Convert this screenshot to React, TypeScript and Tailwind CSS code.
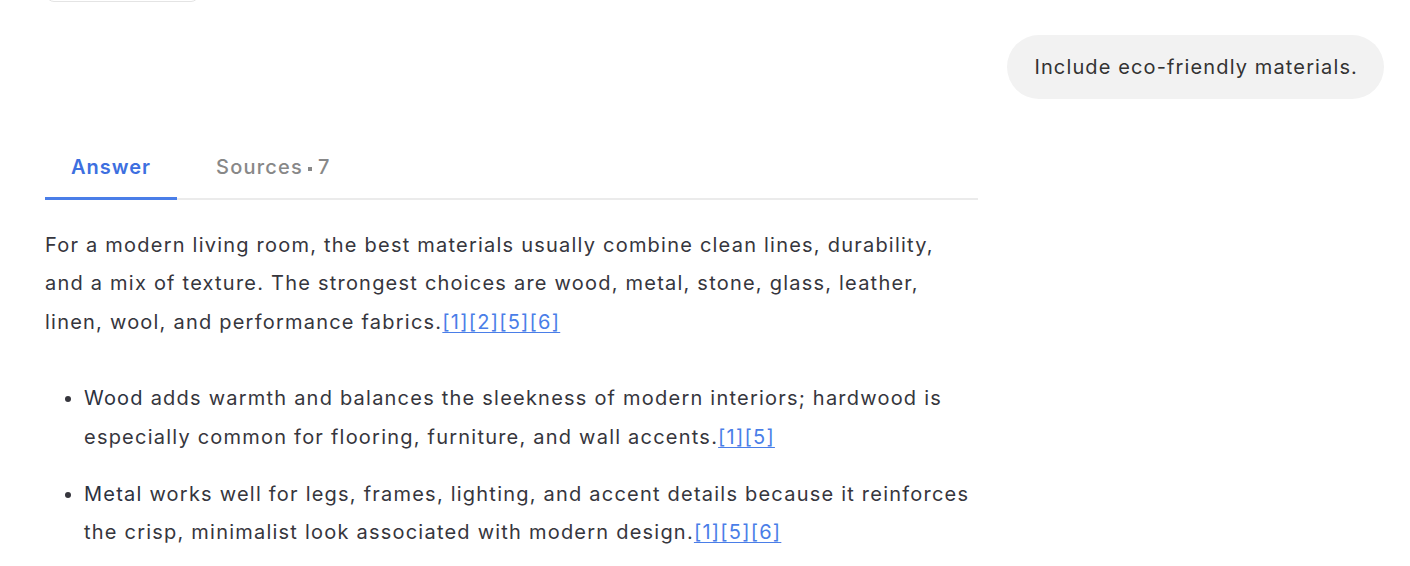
import React from "react";

const Cite = ({ ids }: { ids: number[] }) => (
  <a href="#" className="text-[#4a7ee8] underline underline-offset-[3px] decoration-[1px]">
    {ids.map((n) => `[${n}]`).join("")}
  </a>
);

const bullets: { lead: string; rest: string; ids: number[] }[] = [
  {
    lead: "Wood",
    rest: " adds warmth and balances the sleekness of modern interiors; hardwood is especially common for flooring, furniture, and wall accents.",
    ids: [1, 5],
  },
  {
    lead: "Metal",
    rest: " works well for legs, frames, lighting, and accent details because it reinforces the crisp, minimalist look associated with modern design.",
    ids: [1, 5, 6],
  },
];

export default function App() {
  return (
    <div className="min-h-screen bg-white font-['Inter',sans-serif] text-[#36363d] tracking-[1.2px] overflow-hidden">
      <div className="pl-[45px] pr-[26px]">
        {/* previous toolbar button, scrolled mostly out of view */}
        <div className="-mt-[34px] ml-px h-[36px] w-[153px] rounded-lg border border-[#e4e4e4] bg-white" />

        {/* user message */}
        <div className="mt-[33px] flex justify-end">
          <div className="h-[64px] rounded-full bg-[#f2f2f2] pl-[27px] pr-[26px] flex items-center text-[20px] tracking-[1.13px] text-[#333333]">
            Include eco-friendly materials.
          </div>
        </div>

        <div className="w-[933px] mt-[53px]">
          {/* tabs */}
          <div className="flex items-end border-b-2 border-[#ebebeb]">
            <button className="relative px-[26px] pb-[16px] text-[20px] font-semibold tracking-[1px] text-[#3d6fe0]">
              Answer
              <span className="absolute left-0 right-0 -bottom-[2px] h-[3px] bg-[#4a7ee8]" />
            </button>
            <button className="ml-[13px] px-[26px] pb-[16px] text-[20px] font-medium tracking-[1.2px] text-[#888888] flex items-center">
              Sources
              <span className="ml-[5px] mr-[6px] mt-[3px] inline-block h-[4px] w-[4px] bg-[#888888]" />
              7
            </button>
          </div>

          {/* answer body */}
          <div className="pt-[26px] text-[20px] leading-[38.4px] tracking-[1.22px]">
            <p>
              For a modern living room, the best materials usually combine clean lines, durability, and a mix of
              texture. The strongest choices are wood, metal, stone, glass, leather, linen, wool, and performance
              fabrics.
              <Cite ids={[1, 2, 5, 6]} />
            </p>

            <ul className="mt-[38px] pl-[39px] list-disc marker:text-[#36363d] space-y-[19px]">
              {bullets.map((b) => (
                <li key={b.lead}>
                  <span className="text-[#2c3240]">{b.lead}</span>
                  {b.rest}
                  <Cite ids={b.ids} />
                </li>
              ))}
            </ul>
          </div>
        </div>
      </div>
    </div>
  );
}
